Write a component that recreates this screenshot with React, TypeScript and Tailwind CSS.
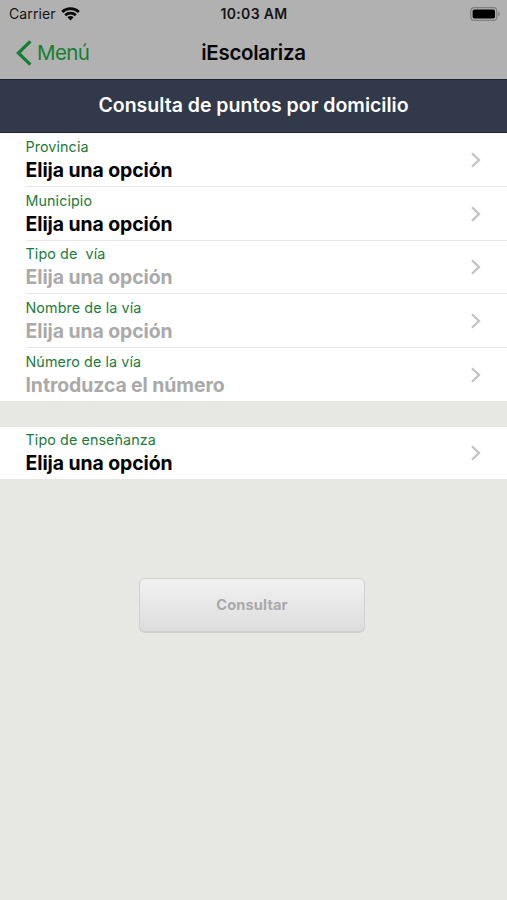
import React from 'react';

interface Field {
  label: string;
  value: string;
  enabled: boolean;
}

const addressFields: Field[] = [
  { label: 'Provincia', value: 'Elija una opción', enabled: true },
  { label: 'Municipio', value: 'Elija una opción', enabled: true },
  { label: 'Tipo de  vía', value: 'Elija una opción', enabled: false },
  { label: 'Nombre de la vía', value: 'Elija una opción', enabled: false },
  { label: 'Número de la vía', value: 'Introduzca el número', enabled: false },
];

const WifiIcon = () => (
  <svg width="19" height="14" viewBox="0 0 19 14" fill="none" stroke="#0a0a0a" strokeWidth="2.7">
    <path d="M1.2 5C5.6 0.6 13.4 0.6 17.8 5" />
    <path d="M4.2 8.2C7 5.5 12 5.5 14.8 8.2" />
    <path d="M6.4 10.2C8.2 8.7 10.8 8.7 12.6 10.2L9.5 13.4Z" fill="#0a0a0a" stroke="none" />
  </svg>
);

const BatteryIcon = () => (
  <svg width="31" height="14" viewBox="0 0 31 14" fill="none">
    <rect x="0.8" y="0.7" width="26" height="12.6" rx="3.4" stroke="#808080" strokeWidth="1.2" />
    <rect x="2.6" y="2.4" width="22.4" height="9.2" rx="1.8" fill="#000" />
    <path d="M28.3 4.7C30.3 5.4 30.3 8.6 28.3 9.3Z" fill="#808080" />
  </svg>
);

const Chevron = () => (
  <svg className="mt-[1px]" width="10" height="16" viewBox="0 0 10 16" fill="none" stroke="#c3c3c6" strokeWidth="2.3">
    <path d="M1 1.2L8 8L1 14.8" />
  </svg>
);

const FieldRow = ({ field, divider }: { field: Field; divider: boolean }) => (
  <button className="block w-full pl-[25.5px] text-left">
    <div
      className={`flex items-center justify-between pr-[26px] ${
        divider ? 'h-[53.75px] border-b border-[#e6e6e8]' : 'h-[52.5px]'
      }`}
    >
      <div>
        <div className="h-[22px] whitespace-pre text-[14.3px] leading-[22px] tracking-[0.1px] text-[#1c7a3a]">{field.label}</div>
        <div
          className={`h-[25px] whitespace-nowrap text-[19.4px] font-[650] leading-[24px] tracking-[-0.07px] ${
            field.enabled ? 'text-black' : 'text-[#aaaaaa]'
          }`}
        >
          {field.value}
        </div>
      </div>
      <Chevron />
    </div>
  </button>
);

export default function App() {
  return (
    <div className="flex h-[900px] w-[507px] flex-col overflow-hidden bg-[#e7e7e4] font-['Inter',sans-serif]">
      {/* Status bar */}
      <header className="h-[79px] bg-[#b1b1b1]">
        <div className="grid h-[27px] grid-cols-3 items-center pl-[7px] pr-[6px] text-[14px] text-[#151515]">
          <div className="flex items-center gap-[5px] pl-[2px]">
            <span className="tracking-[0.1px]">Carrier</span>
            <WifiIcon />
          </div>
          <span className="text-center font-semibold tracking-[0.35px]">10:03 AM</span>
          <div className="flex justify-end">
            <BatteryIcon />
          </div>
        </div>

        {/* Navigation bar */}
        <div className="grid h-[52px] grid-cols-3 items-center px-[15px]">
          <button className="flex items-center gap-[5px] text-[20.5px] text-[#138033]">
            <svg width="17" height="26" viewBox="0 0 17 26" fill="none" stroke="#138033" strokeWidth="3.3">
              <path d="M15.4 1.4L3.4 13L15.4 24.6" />
            </svg>
            <span className="tracking-[-0.6px]">Menú</span>
          </button>
          <h1 className="text-center text-[20.5px] font-semibold tracking-[-0.3px] text-[#080808]">iEscolariza</h1>
        </div>
      </header>

      <div className="flex h-[54px] items-center justify-center border-y border-[#1d2330] bg-[#31394b]">
        <h2 className="whitespace-nowrap text-[19.5px] font-[620] text-white">Consulta de puntos por domicilio</h2>
      </div>

      <main>
        <section className="bg-white">
          {addressFields.map((field, i) => (
            <FieldRow key={field.label} field={field} divider={i < addressFields.length - 1} />
          ))}
        </section>

        <section className="mt-[26px] bg-white">
          <FieldRow field={{ label: 'Tipo de enseñanza', value: 'Elija una opción', enabled: true }} divider={false} />
        </section>

        <div className="mt-[99px] flex justify-center pr-[3px]">
          <button
            disabled
            className="h-[55px] w-[226px] rounded-[6px] border border-b-2 border-[#cfcfcf] bg-gradient-to-b from-[#f1f1f1] to-[#dddddd] pt-[1px] text-[14.6px] font-bold tracking-[0.15px] text-[#aaaaaa]"
          >
            Consultar
          </button>
        </div>
      </main>
    </div>
  );
}
